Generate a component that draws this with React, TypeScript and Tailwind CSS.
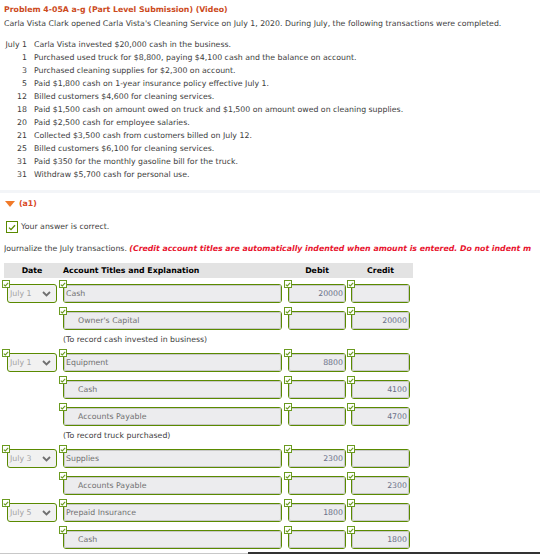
import { ReactNode } from 'react'

type Row =
  | { kind: 'entry'; date?: string; account: string; indent?: boolean; debit?: string; credit?: string }
  | { kind: 'note'; text: string }

const transactions: [string, string][] = [
  ['July 1', 'Carla Vista invested $20,000 cash in the business.'],
  ['1', 'Purchased used truck for $8,800, paying $4,100 cash and the balance on account.'],
  ['3', 'Purchased cleaning supplies for $2,300 on account.'],
  ['5', 'Paid $1,800 cash on 1-year insurance policy effective July 1.'],
  ['12', 'Billed customers $4,600 for cleaning services.'],
  ['18', 'Paid $1,500 cash on amount owed on truck and $1,500 on amount owed on cleaning supplies.'],
  ['20', 'Paid $2,500 cash for employee salaries.'],
  ['21', 'Collected $3,500 cash from customers billed on July 12.'],
  ['25', 'Billed customers $6,100 for cleaning services.'],
  ['31', 'Paid $350 for the monthly gasoline bill for the truck.'],
  ['31', 'Withdraw $5,700 cash for personal use.'],
]

const rows: Row[] = [
  { kind: 'entry', date: 'July 1', account: 'Cash', debit: '20000' },
  { kind: 'entry', account: "Owner's Capital", indent: true, credit: '20000' },
  { kind: 'note', text: '(To record cash invested in business)' },
  { kind: 'entry', date: 'July 1', account: 'Equipment', debit: '8800' },
  { kind: 'entry', account: 'Cash', indent: true, credit: '4100' },
  { kind: 'entry', account: 'Accounts Payable', indent: true, credit: '4700' },
  { kind: 'note', text: '(To record truck purchased)' },
  { kind: 'entry', date: 'July 3', account: 'Supplies', debit: '2300' },
  { kind: 'entry', account: 'Accounts Payable', indent: true, credit: '2300' },
  { kind: 'entry', date: 'July 5', account: 'Prepaid Insurance', debit: '1800' },
  { kind: 'entry', account: 'Cash', indent: true, credit: '1800' },
]

// small green tick badge sitting on the corner of each graded field
function Tick({ className = '' }: { className?: string }) {
  return (
    <div className={`absolute -top-[5px] w-[8px] h-[8px] bg-white border border-[#6a9a1f] flex items-center justify-center ${className}`}>
      <svg width="6" height="5" viewBox="0 0 6 5">
        <path d="M0.8 2.6 L2.3 4 L5.2 0.9" fill="none" stroke="#6a9a1f" strokeWidth="1.1" />
      </svg>
    </div>
  )
}

function Field({ children, className = '' }: { children?: ReactNode; className?: string }) {
  return (
    <div className={`relative h-[19px] rounded-[3px] border-[1.5px] border-[#5a8a00] ${className}`}>
      <Tick className="-left-[5px]" />
      <div className="h-full rounded-[2px] bg-[#ececee] shadow-[inset_0_0_0_1px_#c8c8c8] flex items-center">
        {children}
      </div>
    </div>
  )
}

function DateSelect({ value }: { value?: string }) {
  if (!value) return <div className="w-[50px]" />
  return (
    <div className="relative w-[50px] h-[19px] rounded-[3px] border-[1.5px] border-[#5a8a00] bg-[#f1f1f1] flex items-center justify-between pl-[2px] pr-[5px]">
      <Tick className="-left-[6px]" />
      <span className="text-[#a3a3a3]">{value}</span>
      <svg width="9" height="6" viewBox="0 0 9 6">
        <path d="M1 1 L4.5 4.5 L8 1" fill="none" stroke="#707070" strokeWidth="1.8" />
      </svg>
    </div>
  )
}

export default function App() {
  return (
    <div className="w-[540px] h-[554px] overflow-hidden bg-white flex flex-col text-[7.8px] text-[#3d3d3d] font-['DejaVu_Sans','Verdana',sans-serif]">
      <div className="px-[4px] pt-[3px]">
        <div className="leading-[14px] font-bold text-[#cc4a1c]">Problem 4-05A a-g (Part Level Submission) (Video)</div>
        <div className="leading-[14px] whitespace-nowrap">
          Carla Vista Clark opened Carla Vista's Cleaning Service on July 1, 2020. During July, the following transactions were completed.
        </div>
        <div className="mt-[7px] grid grid-cols-[23px_1fr] gap-x-[7px] leading-[13px]">
          {transactions.map(([d, t], i) => (
            <div key={i} className="contents">
              <span className="text-right whitespace-nowrap">{d}</span>
              <span className="whitespace-nowrap">{t}</span>
            </div>
          ))}
        </div>
      </div>

      <div className="mt-[9px] h-[3px] bg-[#f3f5f8]" />

      <div className="px-[4px]">
        <div className="mt-[4px] flex items-center gap-[4px] leading-[14px]">
          <svg width="10" height="6" viewBox="0 0 10 6" className="ml-[1px]">
            <path d="M0 0 H10 L5 6 Z" fill="#f07a2a" />
          </svg>
          <span className="font-bold text-[#d9461e]">(a1)</span>
        </div>

        <div className="mt-[10px] flex items-center gap-[3px] h-[12px]">
          <div className="ml-[2px] w-[12px] h-[12px] border-[1.5px] border-[#5a8a00] bg-white flex items-center justify-center">
            <svg width="8" height="7" viewBox="0 0 8 7">
              <path d="M1 3.6 L3 5.6 L7 1.2" fill="none" stroke="#5a8a00" strokeWidth="1.3" />
            </svg>
          </div>
          <span>Your answer is correct.</span>
        </div>

        <div className="mt-[9px] leading-[14px] whitespace-nowrap overflow-hidden">
          Journalize the July transactions.{' '}
          <span className="italic font-bold text-[#e8142e]">
            (Credit account titles are automatically indented when amount is entered. Do not indent m
          </span>
        </div>
      </div>

      <div className="ml-[4px] mt-[7px] w-[409px] h-[15px] bg-[#e3e3e3] flex items-center font-bold text-black">
        <div className="ml-[3px] w-[50px] text-center">Date</div>
        <div className="ml-[6px] w-[219px]">Account Titles and Explanation</div>
        <div className="ml-[6px] w-[58px] text-center">Debit</div>
        <div className="ml-[5px] w-[59px] text-center">Credit</div>
      </div>

      <div>
        {rows.map((r, i) =>
          r.kind === 'note' ? (
            <div key={i} className="h-[15px] pl-[63px] flex items-center">{r.text}</div>
          ) : (
            <div key={i} className="h-[27px] pt-[6px] pl-[7px] flex items-start">
              <DateSelect value={r.date} />
              <Field className="ml-[6px] w-[219px]">
                <span className={`text-[#707070] ${r.indent ? 'pl-[14px]' : 'pl-[2px]'}`}>{r.account}</span>
              </Field>
              <Field className="ml-[6px] w-[58px]">
                <span className="ml-auto pr-[2px] text-[#6b7088]">{r.debit}</span>
              </Field>
              <Field className="ml-[5px] w-[59px]">
                <span className="ml-auto pr-[2px] text-[#6b7088]">{r.credit}</span>
              </Field>
            </div>
          )
        )}
      </div>

      <div className="mt-auto flex items-end h-[2px]">
        <div className="w-[248px] h-[1px] bg-[#c8c8c8]" />
        <div className="flex-1 h-[2px] bg-[#333333]" />
      </div>
    </div>
  )
}
